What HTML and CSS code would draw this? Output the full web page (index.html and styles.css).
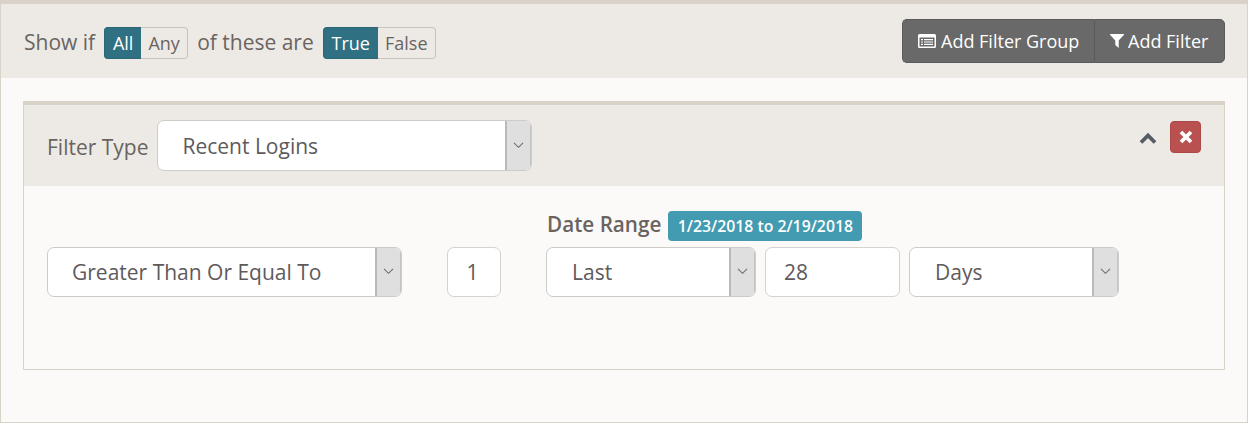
FILE: index.html
```html
<!DOCTYPE html>
<html lang="en">
<head>
<meta charset="utf-8">
<title>Filter</title>
<link rel="stylesheet" href="styles.css">
</head>
<body>
<div class="frame">
  <header class="toolbar">
    <div class="logic">
      <span class="word lead">Show if</span>
      <div class="toggle toggle-first">
        <span class="opt on opt-all">All</span><span class="opt opt-any">Any</span>
      </div>
      <span class="word">of these are</span>
      <div class="toggle">
        <span class="opt on opt-true">True</span><span class="opt opt-false">False</span>
      </div>
    </div>
    <div class="actions">
      <button class="act act-group" type="button">
        <svg class="ico-group" viewBox="0 0 18 14" width="18" height="14"><path fill="#fff" fill-rule="evenodd" d="M1.5 0h15A1.5 1.5 0 0 1 18 1.500v11a1.500 1.500 0 0 1-1.500 1.500h-15A1.500 1.500 0 0 1 0 12.500v-11A1.500 1.500 0 0 1 1.500 0zM1.500 3.500v9h15v-9zM3 5h2v1.200H3zM6 5h9v1.200H6zM3 7.400h2v1.200H3zM6 7.400h9v1.200H6zM3 9.800h2V11H3zM6 9.800h9V11H6z"/></svg>Add Filter Group
      </button>
      <button class="act act-filter" type="button">
        <svg class="ico-funnel" viewBox="0 0 14 14" width="14" height="14"><path fill="#fff" d="M0 0h14v.8L8.700 6.600V14L5.300 11V6.600L0 .8z"/></svg>Add Filter
      </button>
    </div>
  </header>
  <main class="content">
    <section class="panel">
      <div class="panel-head">
        <span class="word type-label">Filter Type</span>
        <div class="select select-type"><span class="value">Recent Logins</span><span class="caret"><svg viewBox="0 0 11 6" width="11" height="6"><path d="M1 .8l4.500 4.500L10 .8" fill="none" stroke="#6f6f6f" stroke-width="1.100"/></svg></span></div>
        <div class="tools">
          <svg class="collapse" viewBox="0 0 18 12" width="18" height="12"><path d="M2 10.500l7-7 7 7" fill="none" stroke="#555c66" stroke-width="3.800"/></svg>
          <button class="remove" type="button"><svg viewBox="0 0 14 14" width="14" height="14"><path d="M2 2l10 10M12 2L2 12" stroke="#fff" stroke-width="3.800" fill="none"/></svg></button>
        </div>
      </div>
      <div class="panel-body">
        <div class="select select-compare"><span class="value">Greater Than Or Equal To</span><span class="caret"><svg viewBox="0 0 11 6" width="11" height="6"><path d="M1 .8l4.500 4.500L10 .8" fill="none" stroke="#6f6f6f" stroke-width="1.100"/></svg></span></div>
        <div class="input input-count">1</div>
        <div class="range">
          <div class="range-label"><span class="range-title">Date Range</span><span class="badge"><span class="badge-text">1/23/2018 to 2/19/2018</span></span></div>
          <div class="range-row">
            <div class="select select-last"><span class="value">Last</span><span class="caret"><svg viewBox="0 0 11 6" width="11" height="6"><path d="M1 .8l4.500 4.500L10 .8" fill="none" stroke="#6f6f6f" stroke-width="1.100"/></svg></span></div>
            <div class="input input-num">28</div>
            <div class="select select-days"><span class="value">Days</span><span class="caret"><svg viewBox="0 0 11 6" width="11" height="6"><path d="M1 .8l4.500 4.500L10 .8" fill="none" stroke="#6f6f6f" stroke-width="1.100"/></svg></span></div>
          </div>
        </div>
      </div>
    </section>
  </main>
</div>
</body>
</html>
```
FILE: styles.css
```css
* { box-sizing: border-box; }
html, body { margin: 0; padding: 0; }
body {
  width: 1248px;
  height: 423px;
  overflow: hidden;
  font-family: "Open Sans", sans-serif;
  color: #6a6461;
  background: #fbfaf8;
}
.frame {
  height: 423px;
  border: 1px solid #d8d2c8;
  border-top: 4px solid #d8d2c8;
  display: flex;
  flex-direction: column;
}
.toolbar {
  height: 74px;
  background: #edeae5;
  padding: 15px 22px 0;
  display: flex;
  justify-content: space-between;
  align-items: flex-start;
}
.logic {
  display: flex;
  align-items: center;
  margin-top: 8px;
  height: 32px;
}
.word {
  font-size: 21px;
  line-height: 28px;
  color: #6a6461;
}
.logic .word { padding-bottom: 2px; height: 30px; }
.lead { margin-left: 1px; }
.toggle {
  display: flex;
  height: 32px;
  margin: 0 10px 0 9px;
  font-size: 18px;
}
.toggle-first { margin-right: 9px; }
.opt {
  display: flex;
  align-items: center;
  justify-content: center;
  height: 32px;
  border: 1px solid #c9c3b9;
  color: #6a6461;
}
.opt:first-child { border-radius: 4px 0 0 4px; border-right: 0; }
.opt:last-child { border-radius: 0 4px 4px 0; border-left: 0; }
.opt.on {
  background: #2f7182;
  border-color: #2a6676;
  color: #fff;
}
.opt-all { width: 37px; }
.opt-any { width: 47px; }
.opt-true { width: 55px; }
.opt-false { width: 58px; }
.actions {
  display: flex;
  height: 44px;
}
.act {
  height: 44px;
  background: #696969;
  border: 1px solid #5a5a5a;
  color: #fff;
  font: 18px "Open Sans", sans-serif;
  display: flex;
  align-items: center;
  padding: 0;
}
.act-group {
  width: 192px;
  border-radius: 5px 0 0 5px;
  padding-left: 15px;
  border-right: 0;
}
.act-filter {
  width: 131px;
  border-radius: 0 5px 5px 0;
  padding-left: 15px;
}
.ico-group { margin-right: 5px; flex: none; }
.ico-funnel { margin-right: 4px; flex: none; }
.content {
  flex: 1;
  padding: 23px 22px 0;
  background: #fbfaf8;
}
.panel {
  height: 269px;
  border: 1px solid #d8d2c8;
  border-top: 4px solid #d8d2c8;
}
.panel-head {
  height: 81px;
  background: #edeae5;
  display: flex;
  align-items: flex-start;
  padding: 15px 23px 0;
}
.type-label {
  margin-top: 13px;
  margin-right: 9px;
}
.tools {
  margin-left: auto;
  margin-top: 1px;
  display: flex;
  align-items: flex-start;
}
.collapse { margin-top: 11px; margin-right: 13px; }
.remove {
  width: 31px;
  height: 32px;
  padding: 0;
  background: #b85150;
  border: 1px solid #ad4848;
  border-radius: 4px;
  display: flex;
  align-items: center;
  justify-content: center;
}
.select {
  height: 50px;
  background: #fff;
  border: 1px solid #cfcbc6;
  border-radius: 7px;
  display: flex;
  align-items: stretch;
  overflow: hidden;
  font-size: 21px;
  color: #5e5a5c;
  flex: none;
}
.value {
  flex: 1;
  display: flex;
  align-items: center;
  padding-left: 24px;
}
.select-last .value, .select-days .value { padding-left: 25px; }
.caret {
  width: 26px;
  background: #dfdfdf;
  border-left: 2px solid #b9b9b9;
  border-right: 1px solid #c4c4c4;
  display: flex;
  align-items: center;
  justify-content: center;
  padding-bottom: 2px;
}
.select-type { width: 375px; height: 51px; }
.select-compare { width: 355px; }
.select-last { width: 210px; }
.select-days { width: 210px; }
.panel-body {
  display: flex;
  align-items: flex-start;
  padding: 24px 23px 0;
}
.select-compare, .input-count { margin-top: 37px; }
.input {
  height: 50px;
  background: #fff;
  border: 1px solid #d6d2cd;
  border-radius: 7px;
  font-size: 21px;
  color: #5e5a5c;
  display: flex;
  align-items: center;
  flex: none;
}
.input-count {
  width: 54px;
  margin-left: 45px;
  padding-right: 3px;
  justify-content: center;
}
.input-num {
  width: 135px;
  padding-left: 18px;
}
.range { margin-left: 45px; }
.range-label {
  display: flex;
  align-items: flex-start;
  height: 30px;
  margin: 1px 0 6px 1px;
}
.range-title {
  font-size: 20.700px;
  line-height: 26px;
  font-weight: 600;
  color: #6a6461;
}
.badge {
  margin-left: 7px;
  width: 194px;
  height: 30px;
  background: #429bb0;
  border-radius: 4px;
  color: #fff;
  font-size: 15.800px;
  font-weight: 600;
  display: flex;
  align-items: center;
  justify-content: center;
}
.badge-text { padding-bottom: 1px; }
.range-row {
  display: flex;
  gap: 9px;
}
```
